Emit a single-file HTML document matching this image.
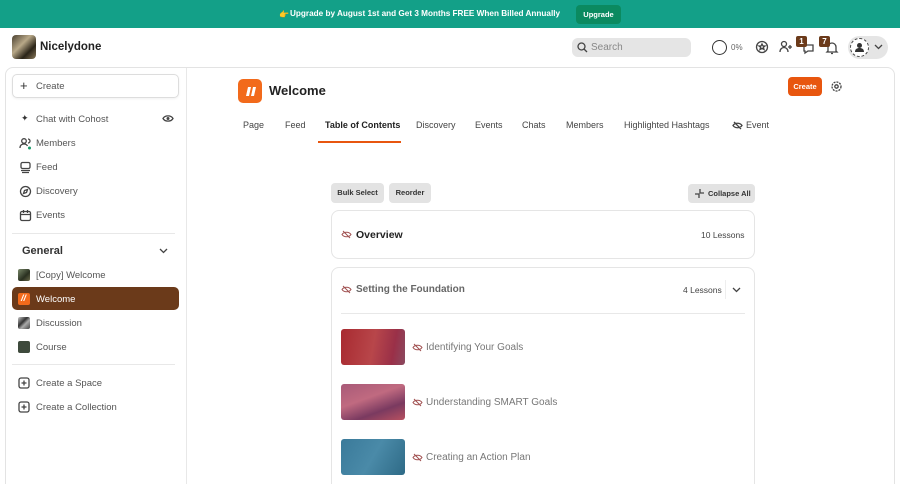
<!DOCTYPE html>
<html><head><meta charset="utf-8"><style>
*{margin:0;padding:0;box-sizing:border-box}
html,body{width:900px;height:484px;overflow:hidden}
body{background:#fff;font-family:"Liberation Sans",sans-serif;color:#333;position:relative}
.a{position:absolute;white-space:nowrap}
.t{font-size:9.5px;color:#555}
.tb{font-size:9px;color:#444}
svg{position:absolute}
.ic{stroke:#444;fill:none;stroke-width:1.3}
</style></head><body>
<div class="a" style="left:0;top:0;width:900px;height:28px;background:#13a088"></div>
<div class="a" style="left:279px;top:10px;font-size:8px;color:#e8c040">👉</div>
<div class="a" style="left:290px;top:9px;font-size:8.2px;font-weight:bold;color:#fff">Upgrade by August 1st and Get 3 Months FREE When Billed Annually</div>
<div class="a" style="left:576px;top:5px;width:45px;height:19px;background:#0b8a60;border-radius:4px;color:#fff;font-size:7.5px;font-weight:bold;text-align:center;line-height:19px">Upgrade</div>

<div class="a" style="left:12px;top:35px;width:24px;height:24px;border-radius:4px;background:linear-gradient(135deg,#4a4030,#b8a888 40%,#2a2418 70%,#8a7a5a)"></div>
<div class="a" style="left:40px;top:41px;font-size:11.5px;font-weight:bold;color:#222">Nicelydone</div>
<div class="a" style="left:572px;top:38px;width:119px;height:19px;background:#e5e5e5;border-radius:6px"></div>
<svg style="left:577px;top:42px" width="11" height="11"><circle cx="4.5" cy="4.5" r="3.5" class="ic" stroke="#666"/><path d="M7 7l3 3" class="ic"/></svg>
<div class="a" style="left:591px;top:42px;font-size:10px;color:#888">Search</div>
<div class="a" style="left:712px;top:40px;width:15px;height:15px;border:1.5px solid #333;border-radius:50%"></div>
<div class="a" style="left:731px;top:43px;font-size:8px;color:#666">0%</div>
<svg style="left:755px;top:40px" width="14" height="14"><circle cx="7" cy="7" r="5.5" class="ic"/><path d="M7 4l1 2h2l-1.6 1.3.6 2.2L7 8.3 5 9.5l.6-2.2L4 6h2z" class="ic" stroke-width="1"/></svg>
<svg style="left:779px;top:40px" width="15" height="14"><circle cx="5" cy="4" r="2.5" class="ic"/><path d="M1 12c0-3 2-4.5 4-4.5s4 1.5 4 4.5M11 5v4M9 7h4" class="ic"/></svg>
<svg style="left:802px;top:42px" width="14" height="14"><path d="M2 3h9v6H6l-3 2V9H2z" class="ic"/></svg>
<div class="a" style="left:796px;top:36px;width:11px;height:11px;background:#6b3a1a;border-radius:2px;color:#fff;font-size:8px;font-weight:bold;text-align:center;line-height:11px">1</div>
<svg style="left:825px;top:41px" width="14" height="14"><path d="M3 10V6a4 4 0 018 0v4l1 1H2zM6 12.5h2" class="ic"/></svg>
<div class="a" style="left:819px;top:36px;width:11px;height:11px;background:#6b3a1a;border-radius:2px;color:#fff;font-size:8px;font-weight:bold;text-align:center;line-height:11px">7</div>
<div class="a" style="left:848px;top:36px;width:40px;height:23px;background:#e5e5e5;border-radius:12px"></div>
<div class="a" style="left:850px;top:38px;width:19px;height:19px;border:1px dashed #444;border-radius:50%;background:#fff"></div>
<svg style="left:853px;top:41px" width="13" height="13"><circle cx="6.5" cy="4.5" r="2.5" fill="#333"/><path d="M2 11c0-3 2-4 4.5-4s4.5 1 4.5 4z" fill="#333"/></svg>
<svg style="left:874px;top:44px" width="9" height="6"><path d="M1 1l3.5 3.5L8 1" class="ic"/></svg>

<div class="a" style="left:5px;top:67px;width:890px;height:430px;border:1px solid #e3e3e3;border-radius:8px"></div>
<div class="a" style="left:186px;top:68px;width:1px;height:416px;background:#e8e8e8"></div>

<div class="a" style="left:12px;top:74px;width:167px;height:24px;border:1px solid #ddd;border-radius:5px;box-shadow:0 1px 2px rgba(0,0,0,.06)"></div>
<div class="a" style="left:20px;top:78px;font-size:13px;color:#333">+</div>
<div class="a t" style="left:36px;top:81px">Create</div>
<div class="a" style="left:21px;top:113px;font-size:9px;color:#333">✦</div>
<div class="a t" style="left:36px;top:114px">Chat with Cohost</div>
<svg style="left:162px;top:114px" width="12" height="9"><path d="M1 4.5C3 1 9 1 11 4.5 9 8 3 8 1 4.5z" class="ic"/><circle cx="6" cy="4.5" r="1.5" fill="#444"/></svg>
<svg style="left:19px;top:137px" width="13" height="13"><circle cx="5" cy="4" r="2.3" class="ic"/><path d="M1 11c0-3 2-4 4-4s3 1 3.5 2M9 2a2 2 0 010 4" class="ic"/><circle cx="10.5" cy="11" r="1.5" fill="#1a9a6a"/></svg>
<div class="a t" style="left:36px;top:138px">Members</div>
<svg style="left:19px;top:161px" width="13" height="13"><rect x="2" y="1.5" width="9" height="6" rx="1.5" class="ic"/><path d="M2 9.5h9M3 11.5h7" class="ic"/></svg>
<div class="a t" style="left:36px;top:162px">Feed</div>
<svg style="left:19px;top:185px" width="13" height="13"><circle cx="6.5" cy="6.5" r="5" class="ic"/><path d="M8.5 4.5L7.5 7.5 4.5 8.5 5.5 5.5z" class="ic" stroke-width="1"/></svg>
<div class="a t" style="left:36px;top:186px">Discovery</div>
<svg style="left:19px;top:209px" width="13" height="13"><rect x="1.5" y="2.5" width="10" height="9" rx="1.5" class="ic"/><path d="M1.5 5.5h10M4.5 1v3M8.5 1v3" class="ic"/></svg>
<div class="a t" style="left:36px;top:210px">Events</div>
<div class="a" style="left:12px;top:233px;width:163px;height:1px;background:#e8e8e8"></div>
<div class="a" style="left:22px;top:245px;font-size:11px;font-weight:bold;color:#333">General</div>
<svg style="left:159px;top:248px" width="9" height="6"><path d="M1 1l3.5 3.5L8 1" class="ic"/></svg>
<div class="a" style="left:18px;top:269px;width:12px;height:12px;border-radius:2px;background:linear-gradient(135deg,#7a8a6a,#2a3020 60%,#6a6a4a)"></div>
<div class="a t" style="left:36px;top:270px">[Copy] Welcome</div>
<div class="a" style="left:12px;top:287px;width:167px;height:23px;background:#6b3a1a;border-radius:5px"></div>
<div class="a" style="left:18px;top:293px;width:12px;height:12px;border-radius:2px;background:#f26a1b"></div>
<div class="a" style="left:21px;top:293px;font-size:9px;color:#fff;font-weight:bold;font-style:italic">//</div>
<div class="a" style="left:36px;top:294px;font-size:9.5px;color:#fff">Welcome</div>
<div class="a" style="left:18px;top:317px;width:12px;height:12px;border-radius:2px;background:linear-gradient(135deg,#ccc,#333 40%,#aaa 60%,#444)"></div>
<div class="a t" style="left:36px;top:318px">Discussion</div>
<div class="a" style="left:18px;top:341px;width:12px;height:12px;border-radius:2px;background:#3e4a3c"></div>
<div class="a t" style="left:36px;top:342px">Course</div>
<div class="a" style="left:12px;top:364px;width:163px;height:1px;background:#e8e8e8"></div>
<svg style="left:18px;top:377px" width="12" height="12"><rect x="1" y="1" width="10" height="10" rx="2" class="ic"/><path d="M6 3.5v5M3.5 6h5" class="ic"/></svg>
<div class="a t" style="left:36px;top:378px">Create a Space</div>
<svg style="left:18px;top:401px" width="12" height="12"><rect x="1" y="1" width="10" height="10" rx="2" class="ic"/><path d="M6 3.5v5M3.5 6h5" class="ic"/></svg>
<div class="a t" style="left:36px;top:402px">Create a Collection</div>

<div class="a" style="left:238px;top:79px;width:24px;height:24px;background:#f26a1b;border-radius:5px"></div>
<svg style="left:238px;top:79px" width="24" height="24"><path d="M8 17l2-9h3l-2 9zM13 17l2-9h3l-2 9z" fill="#fff"/></svg>
<div class="a" style="left:269px;top:83px;font-size:13px;font-weight:bold;color:#222">Welcome</div>
<div class="a" style="left:788px;top:77px;width:34px;height:19px;background:#e8560f;border-radius:4px;color:#fff;font-size:7.5px;font-weight:bold;text-align:center;line-height:19px">Create</div>
<svg style="left:830px;top:80px" width="13" height="13"><circle cx="6.5" cy="6.5" r="4.5" class="ic" stroke-dasharray="2 1" stroke-width="2"/><circle cx="6.5" cy="6.5" r="1.7" class="ic"/></svg>

<div class="a tb" style="left:243px;top:120px">Page</div>
<div class="a tb" style="left:285px;top:120px">Feed</div>
<div class="a" style="left:325px;top:120px;font-size:9px;font-weight:bold;color:#222">Table of Contents</div>
<div class="a" style="left:318px;top:141px;width:83px;height:2px;background:#e8560f"></div>
<div class="a tb" style="left:416px;top:120px">Discovery</div>
<div class="a tb" style="left:475px;top:120px">Events</div>
<div class="a tb" style="left:522px;top:120px">Chats</div>
<div class="a tb" style="left:566px;top:120px">Members</div>
<div class="a tb" style="left:624px;top:120px">Highlighted Hashtags</div>
<svg style="left:732px;top:121px" width="11" height="9"><path d="M1 4.5C3 1.5 8 1.5 10 4.5 8 7.5 3 7.5 1 4.5zM2 1l7 7" class="ic" stroke-width="1"/></svg>
<div class="a tb" style="left:746px;top:120px">Event</div>

<div class="a" style="left:331px;top:183px;width:53px;height:20px;background:#e3e3e3;border-radius:4px;font-size:7.5px;font-weight:bold;text-align:center;line-height:20px;color:#333">Bulk Select</div>
<div class="a" style="left:389px;top:183px;width:42px;height:20px;background:#e3e3e3;border-radius:4px;font-size:7.5px;font-weight:bold;text-align:center;line-height:20px;color:#333">Reorder</div>
<div class="a" style="left:688px;top:184px;width:67px;height:19px;background:#e3e3e3;border-radius:4px;font-size:7.5px;font-weight:bold;line-height:19px;color:#333;padding-left:20px">Collapse All</div>
<svg style="left:694px;top:188px" width="11" height="11"><path d="M1 6h4V10M6 1v4h4" class="ic" stroke-width="1"/></svg>

<div class="a" style="left:331px;top:210px;width:424px;height:49px;border:1px solid #e5e5e5;border-radius:8px"></div>
<svg style="left:341px;top:230px" width="11" height="9"><path d="M1 4.5C3 1.5 8 1.5 10 4.5 8 7.5 3 7.5 1 4.5zM2 1l7 7" fill="none" stroke="#a05050" stroke-width="1"/></svg>
<div class="a" style="left:356px;top:229px;font-size:10.5px;font-weight:bold;color:#222">Overview</div>
<div class="a" style="left:701px;top:230px;font-size:8.5px;color:#444">10 Lessons</div>

<div class="a" style="left:331px;top:267px;width:424px;height:240px;border:1px solid #e5e5e5;border-radius:8px"></div>
<svg style="left:341px;top:285px" width="11" height="9"><path d="M1 4.5C3 1.5 8 1.5 10 4.5 8 7.5 3 7.5 1 4.5zM2 1l7 7" fill="none" stroke="#a05050" stroke-width="1"/></svg>
<div class="a" style="left:356px;top:284px;font-size:10px;color:#666;font-weight:bold">Setting the Foundation</div>
<div class="a" style="left:683px;top:285px;font-size:8.5px;color:#444">4 Lessons</div>
<div class="a" style="left:725px;top:280px;width:1px;height:19px;background:#eee"></div>
<svg style="left:732px;top:287px" width="9" height="6"><path d="M1 1l3.5 3.5L8 1" class="ic"/></svg>
<div class="a" style="left:341px;top:313px;width:404px;height:1px;background:#e8e8e8"></div>

<div class="a" style="left:341px;top:329px;width:64px;height:36px;border-radius:3px;background:linear-gradient(100deg,#a82a30,#b8464a 50%,#9a3048 80%,#8a4a60)"></div>
<svg style="left:412px;top:343px" width="11" height="9"><path d="M1 4.5C3 1.5 8 1.5 10 4.5 8 7.5 3 7.5 1 4.5zM2 1l7 7" fill="none" stroke="#a05050" stroke-width="1"/></svg>
<div class="a" style="left:426px;top:342px;font-size:10px;color:#777">Identifying Your Goals</div>
<div class="a" style="left:341px;top:384px;width:64px;height:36px;border-radius:3px;background:linear-gradient(160deg,#a85a78,#c06a80 40%,#7a3a60 70%,#b85060)"></div>
<svg style="left:412px;top:398px" width="11" height="9"><path d="M1 4.5C3 1.5 8 1.5 10 4.5 8 7.5 3 7.5 1 4.5zM2 1l7 7" fill="none" stroke="#a05050" stroke-width="1"/></svg>
<div class="a" style="left:426px;top:397px;font-size:10px;color:#777">Understanding SMART Goals</div>
<div class="a" style="left:341px;top:439px;width:64px;height:36px;border-radius:3px;background:linear-gradient(120deg,#3a7a9a,#4a8aa8 50%,#2e6a86)"></div>
<svg style="left:412px;top:453px" width="11" height="9"><path d="M1 4.5C3 1.5 8 1.5 10 4.5 8 7.5 3 7.5 1 4.5zM2 1l7 7" fill="none" stroke="#a05050" stroke-width="1"/></svg>
<div class="a" style="left:426px;top:452px;font-size:10px;color:#777">Creating an Action Plan</div>
</body></html>
